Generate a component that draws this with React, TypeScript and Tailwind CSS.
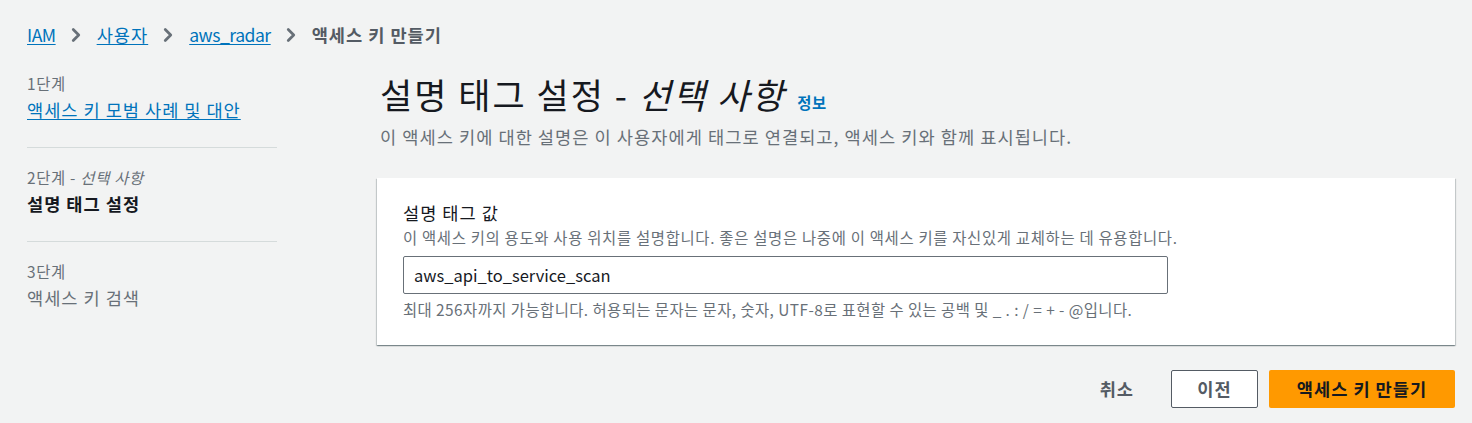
import { ChevronRight } from "lucide-react";

const font = { fontFamily: '"Noto Sans CJK KR", "Noto Sans", sans-serif' };

function Crumb({ children, last, ko }: { children: React.ReactNode; last?: boolean; ko?: boolean }) {
  return last ? (
    <span className="font-bold text-[#545b64] tracking-[1px]">{children}</span>
  ) : (
    <>
      <a className={`text-[#0073bb] underline underline-offset-2 ${ko ? "tracking-[1px]" : "tracking-[-0.5px]"}`}>
        {children}
      </a>
      <ChevronRight className="ml-[9px] mr-[10px] h-[22px] w-[22px] text-[#687078]" strokeWidth={3} />
    </>
  );
}

export default function App() {
  return (
    <div style={font} className="w-[1472px] h-[423px] bg-[#f2f3f3] text-[#16191f] pl-[27px] pr-[17px] overflow-hidden">
      {/* Breadcrumbs */}
      <nav className="flex items-center h-[70px] text-[17.6px]">
        <Crumb>IAM</Crumb>
        <Crumb ko>사용자</Crumb>
        <Crumb>aws_radar</Crumb>
        <Crumb last>액세스 키 만들기</Crumb>
      </nav>

      <div className="flex">
        {/* Steps */}
        <aside className="w-[250px] shrink-0 tracking-[1px]">
          <div className="pt-[1px] pb-[22px]">
            <div className="text-[15.4px] text-[#687078] leading-[24px] tracking-[0.7px]">1단계</div>
            <a className="text-[17.6px] text-[#0073bb] underline underline-offset-2 leading-[30px]">
              액세스 키 모범 사례 및 대안
            </a>
          </div>
          <div className="border-t border-[#d5dbdb] pt-[17px] pb-[22px]">
            <div className="text-[15.4px] text-[#687078] leading-[24px] tracking-[0.7px]">
              2단계 - <i>선택 사항</i>
            </div>
            <div className="text-[17.6px] font-bold leading-[30px]">설명 태그 설정</div>
          </div>
          <div className="border-t border-[#d5dbdb] pt-[17px]">
            <div className="text-[15.4px] text-[#687078] leading-[24px] tracking-[0.7px]">3단계</div>
            <div className="text-[17.6px] text-[#687078] leading-[30px]">액세스 키 검색</div>
          </div>
        </aside>

        {/* Main */}
        <main className="ml-[100px] flex-1">
          <div className="pl-[3px]">
            <h1 className="text-[35px] leading-[48px] font-normal">
              <span className="tracking-[2px]">
                설명 태그 설정 - <i>선택 사항</i>
              </span>
              <span className="ml-[12px] text-[15.4px] font-bold text-[#0073bb] tracking-[0.5px]">정보</span>
            </h1>
            <p className="text-[17.6px] text-[#687078] leading-[26px] -mt-[2px] tracking-[1.05px]">
              이 액세스 키에 대한 설명은 이 사용자에게 태그로 연결되고, 액세스 키와 함께 표시됩니다.
            </p>
          </div>

          <section className="mt-[28px] bg-white px-[26px] pt-[22px] pb-[25px] shadow-[0_1px_1px_0_rgba(0,28,36,0.3),1px_1px_1px_0_rgba(0,28,36,0.15),-1px_1px_1px_0_rgba(0,28,36,0.15)]">
            <label className="block text-[17.6px] leading-[26px] tracking-[1px]">설명 태그 값</label>
            <div className="text-[15.4px] text-[#687078] leading-[22px] tracking-[0.7px]">
              이 액세스 키의 용도와 사용 위치를 설명합니다. 좋은 설명은 나중에 이 액세스 키를 자신있게 교체하는 데 유용합니다.
            </div>
            <input
              readOnly
              value="aws_api_to_service_scan"
              style={font}
              className="mt-[8px] block w-[765px] h-[38px] px-[10px] text-[16.5px] text-[#16191f] border border-[#687078] rounded-[2px] bg-white outline-none"
            />
            <div className="mt-[4px] text-[15.4px] text-[#687078] leading-[22px] tracking-[0.45px]">
              최대 256자까지 가능합니다. 허용되는 문자는 문자, 숫자, UTF-8로 표현할 수 있는 공백 및 _ . : / = + - @입니다.
            </div>
          </section>

          <div className="flex justify-end items-center mt-[25px]">
            <button className="text-[17.6px] font-bold text-[#545b64] mr-[37px] tracking-[1px]">취소</button>
            <button className="w-[87px] h-[38px] border border-[#545b64] rounded-[2px] bg-white text-[17.6px] font-bold text-[#545b64] mr-[11px] tracking-[1px]">
              이전
            </button>
            <button className="w-[186px] h-[38px] rounded-[2px] bg-[#ff9900] text-[17.6px] font-bold text-[#16191f] tracking-[1px]">
              액세스 키 만들기
            </button>
          </div>
        </main>
      </div>
    </div>
  );
}
